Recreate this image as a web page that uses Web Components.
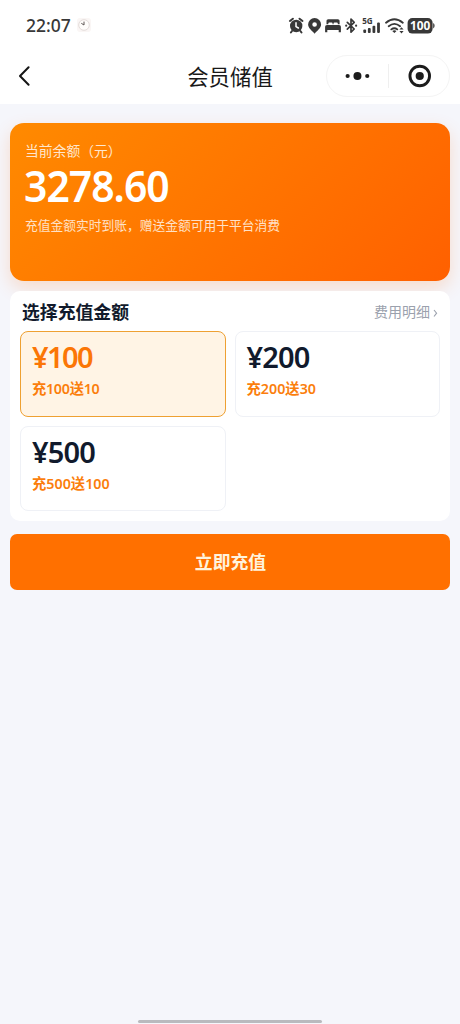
<!DOCTYPE html>
<html lang="zh-CN">
<head>
<meta charset="utf-8">
<meta name="viewport" content="width=device-width,initial-scale=1">
<title>会员储值</title>
<style>
html,body{margin:0;height:100%;background:#f5f6fb}
body{font-family:"Noto Sans","Noto Sans CJK SC",sans-serif;color:#111a2c;overflow:hidden}
</style>
</head>
<body>
<recharge-page></recharge-page>
<script>
const define = (name, html, setup) => customElements.define(name, class extends HTMLElement {
  constructor() {
    super();
    const t = document.createElement('template');
    t.innerHTML = html;
    this.attachShadow({mode: 'open'}).append(t.content.cloneNode(true));
  }
  connectedCallback() { if (setup) setup(this); }
});

define('status-bar', `
<style>
:host{display:flex;height:49px;padding:1px 25px 0 26px;box-sizing:border-box;align-items:center;color:#383838}
time{font:500 17.5px/24px "Noto Sans",sans-serif;letter-spacing:0}
.clock{margin-left:6px;margin-right:auto}
.icons{display:block}
svg text{font-family:"Noto Sans",sans-serif;font-weight:700}
</style>
<time>22:07</time>
<svg class="clock" width="14" height="14" viewBox="0 0 14 14"><rect width="14" height="14" rx="3" fill="#faf6f5"/><circle cx="7" cy="7" r="5.3" fill="#fffdfb" stroke="#e4dcda"/><path d="M7 7 4.3 5.3M7 7V3.6" stroke="#5e5654" stroke-width="1" fill="none"/></svg>
<svg class="icons" width="147" height="20" viewBox="288 15 147 20" fill="#383838">
  <g stroke="#383838" stroke-linecap="round" fill="none">
    <circle cx="296.2" cy="26" r="6.2" fill="#383838" stroke="none"/>
    <path d="M289.9 21 292.9 18.7M302.5 21 299.5 18.7M292 31 290.9 32.5M300.4 31 301.5 32.5" stroke-width="2"/>
    <path d="M296 22.8V26.6L298.4 28" stroke="#fff" stroke-width="1.5"/>
  </g>
  <path fill-rule="evenodd" d="M314.6 18a6.5 6.5 0 0 0-6.5 6.5c0 3.8 4 6 6.5 9.2 2.5-3.2 6.5-5.4 6.5-9.2a6.5 6.5 0 0 0-6.5-6.5Zm0 4.2a2.3 2.3 0 1 1 0 4.6 2.3 2.3 0 0 1 0-4.6Z"/>
  <path d="M328.2 19.2h9.7q1.7 0 1.7 1.5v3.6h-1.8v-.9q0-1-1-1h-2.3q-1 0-1 1v.9h-.9v-.9q0-1-1-1h-2.3q-1 0-1 1v.9h-1.8v-3.6q0-1.5 1.7-1.5ZM327 24.9h12q1.9 0 1.9 1.8v5.6h-2.2v-2.2h-11.4v2.2h-2.2v-5.6q0-1.8 1.9-1.8Z"/>
  <path d="M347.3 22.3 354.2 29 351 32.2V19.1l3.2 3.2-6.9 6.8" fill="none" stroke="#383838" stroke-width="1.7" stroke-linejoin="round" stroke-linecap="round"/>
  <circle cx="346.2" cy="25.7" r="1.1"/><circle cx="356.1" cy="25.7" r="1.1"/>
  <text x="362.2" y="23.6" font-size="8.2" textLength="10.5" lengthAdjust="spacingAndGlyphs">5G</text>
  <rect x="363.3" y="29.4" width="2.8" height="3.5" rx="1"/><rect x="367.9" y="28" width="2.8" height="4.9" rx="1"/><rect x="372.5" y="25.8" width="2.8" height="7.1" rx="1"/><rect x="377.1" y="22.4" width="2.8" height="10.5" rx="1"/>
  <g fill="none" stroke="#383838" stroke-width="1.8" stroke-linecap="round"><path d="M386 22.7q8.4-7 16.8 0M388.7 26.2q5.7-4.6 11.4 0M391.3 29.4q3.1-2.4 6 0"/></g>
  <path d="m392.2 31 2.2 2.1 2.1-2.1q-2-1.4-4.3 0ZM401.5 27.3l2.1 2.3h-4.2ZM401.5 33.4l-2.1-2.4h4.2Z"/>
  <rect x="407.6" y="18" width="25" height="15.6" rx="4.8"/><path d="M433.2 23v5.4q1.4-.8 1.4-2.7t-1.4-2.7Z"/>
  <text x="410" y="30.2" font-size="12" fill="#fff" textLength="20.3" lengthAdjust="spacingAndGlyphs">100</text>
</svg>`);

define('nav-bar', `
<style>
:host{display:grid;grid-template-columns:1fr auto 1fr;height:55px;padding:0 10px 1px;box-sizing:border-box;align-items:center;color:#181818}
.back{margin-left:7px}
h1{margin:0;font:400 21.4px/28px "Noto Sans CJK SC",sans-serif;padding-bottom:1px}
.capsule{justify-self:end;display:flex;align-items:center;width:124px;height:42px;box-sizing:border-box;border:1.5px solid #f4f4f4;border-radius:21px}
.capsule svg{flex:1}
i{width:1px;height:24px;background:#efefef}
</style>
<svg class="back" width="16" height="24" viewBox="0 0 16 24"><path d="M11.6 3.3 3 12l8.6 8.7" fill="none" stroke="#151515" stroke-width="2" stroke-linecap="round" stroke-linejoin="round"/></svg>
<h1><slot></slot></h1>
<div class="capsule">
<svg width="60" height="24" viewBox="0 0 60 24" fill="#1c1c1c"><circle cx="20.4" cy="12" r="2.1"/><circle cx="30.2" cy="12" r="4"/><circle cx="40" cy="12" r="2.1"/></svg>
<i></i>
<svg width="60" height="24" viewBox="0 0 60 24"><circle cx="30.5" cy="12" r="9.8" fill="none" stroke="#1c1c1c" stroke-width="2.9"/><circle cx="30.5" cy="12" r="4.1" fill="#1c1c1c"/></svg>
</div>`);

define('balance-card', `
<style>
:host{display:block;height:158px;padding:18px 15px 0;box-sizing:border-box;border-radius:14px;background:linear-gradient(135deg,#ff8a00,#ff6000);box-shadow:0 7px 18px rgba(255,106,0,.19);color:#fff}
p{margin:0;font-family:"Noto Sans CJK SC",sans-serif;white-space:nowrap}
.label{font-size:13.8px;line-height:18px;color:#ffe7cf}
.value{font:600 43.5px/46px "Noto Sans",sans-serif;letter-spacing:-1.05px;transform:scaleX(.94);transform-origin:0 50%;width:max-content;margin:3px 0 0 -1px}
.hint{font-size:12.75px;line-height:18px;margin-top:8px;color:#ffe1c7}
</style>
<p class="label">当前余额（元）</p>
<div class="value"><slot></slot></div>
<p class="hint">充值金额实时到账，赠送金额可用于平台消费</p>`);

define('amount-option', `
<style>
:host{display:block;height:85.5px;padding:9px 11px;box-sizing:border-box;border:1.5px solid #eff1f6;border-radius:8px;background:#fff;color:#111a2c}
:host([selected]){border-color:#eea032;background:#fff4e5;color:#fb7606}
.price{font:600 29px/32px "Noto Sans",sans-serif;letter-spacing:-.8px}
:host([selected]) .price{letter-spacing:-1.6px}
.gift{font:600 14.3px/20px "Noto Sans","Noto Sans CJK SC",sans-serif;margin-top:6px;color:#fb7e0c}
:host([selected]) .gift{letter-spacing:-.3px}
</style>
<div class="price"></div><div class="gift"></div>`, el => {
  const amount = el.getAttribute('amount');
  el.shadowRoot.querySelector('.price').textContent = '¥' + amount;
  el.shadowRoot.querySelector('.gift').textContent = '充' + amount + '送' + el.getAttribute('bonus');
});

define('amount-panel', `
<style>
:host{display:block;margin-top:10px;height:230px;padding:7px 10px 0;box-sizing:border-box;border-radius:10px;background:#fff;position:relative}
header{display:flex;justify-content:space-between;align-items:center;height:26px;padding:0 2px;margin-bottom:7px}
h2{margin:0;font:700 17.85px/26px "Noto Sans CJK SC",sans-serif;color:#111a2c}
a{font:400 14px/26px "Noto Sans CJK SC",sans-serif;color:#9ba1ad;display:flex;align-items:center;gap:3px}
a svg{margin-top:3px}
.grid{display:grid;grid-template-columns:1fr 1fr;gap:9px}
</style>
<header><h2>选择充值金额</h2><a>费用明细<svg width="5" height="10" viewBox="0 0 5 10"><path d="m1 2 2.6 3.2L1 8.5" fill="none" stroke="#9ba1ad" stroke-width="1.1"/></svg></a></header>
<div class="grid"><slot></slot></div>`);

define('primary-button', `
<style>
:host{display:block;margin-top:13px}
button{display:block;width:100%;height:56.4px;padding:0 0 2px 1px;border:0;border-radius:7px;background:#ff7000;color:#fff3dc;font:700 17.85px/26px "Noto Sans CJK SC",sans-serif}
</style>
<button><slot></slot></button>`);

define('recharge-page', `
<style>
:host{display:flex;flex-direction:column;height:100vh;background:#f5f6fb}
.top{background:#fff}
main{flex:1;padding:19px 10px 0}
footer{display:flex;justify-content:center;padding-bottom:1px}
footer i{width:184px;height:3px;border-radius:2px;background:#b9babe}
</style>
<div class="top"><status-bar></status-bar><nav-bar>会员储值</nav-bar></div>
<main>
<balance-card>3278.60</balance-card>
<amount-panel>
<amount-option amount="100" bonus="10" selected></amount-option>
<amount-option amount="200" bonus="30"></amount-option>
<amount-option amount="500" bonus="100"></amount-option>
</amount-panel>
<primary-button>立即充值</primary-button>
</main>
<footer><i></i></footer>`);
</script>
</body>
</html>
